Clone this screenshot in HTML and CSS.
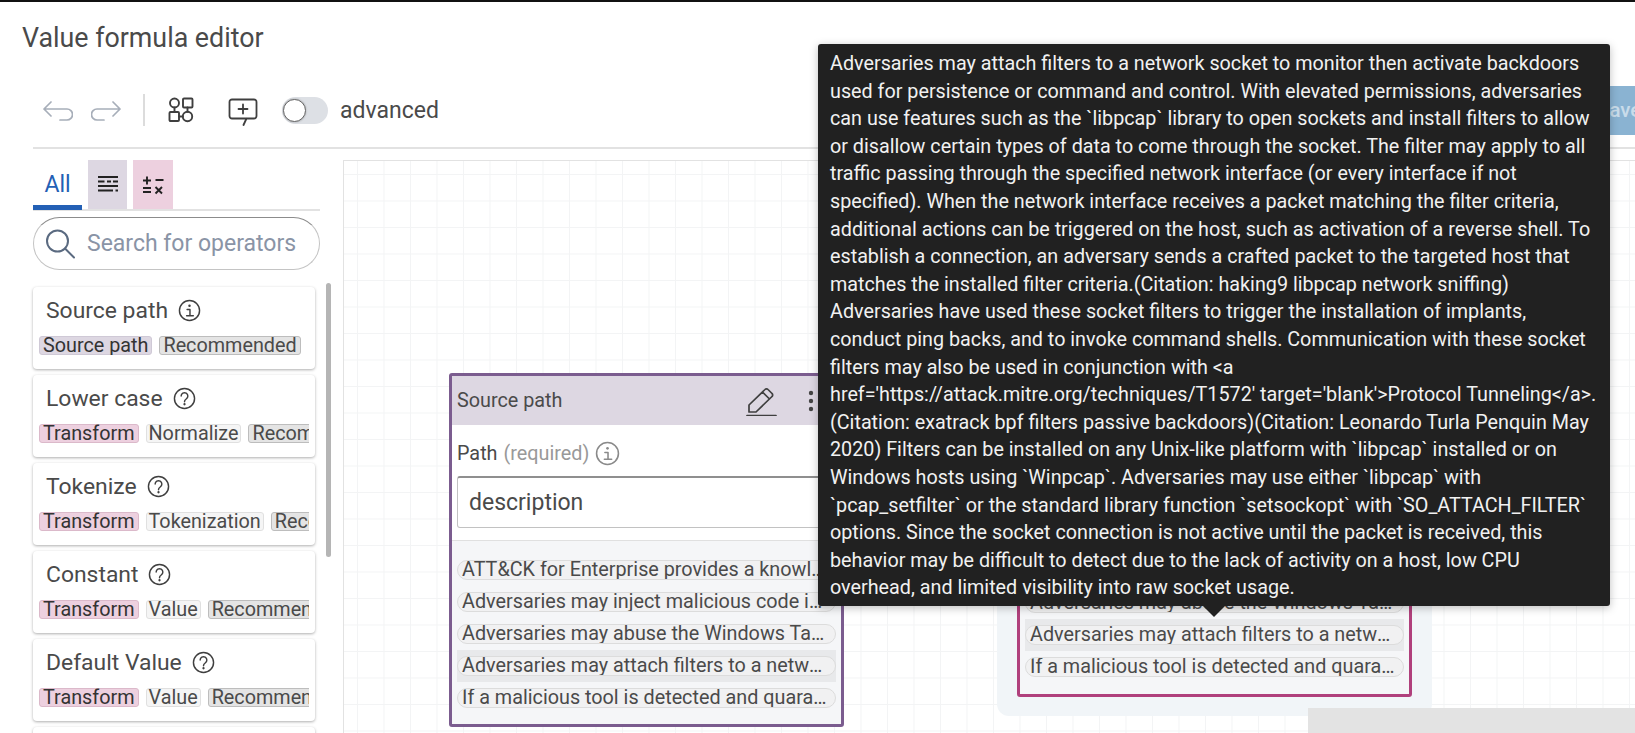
FILE: index.html
```html
<!DOCTYPE html>
<html lang="en">
<head>
<meta charset="utf-8">
<title>Value formula editor</title>
<link rel="stylesheet" href="styles.css">
</head>
<body>
<div class="topbar"></div>
<h1 class="title">Value formula editor</h1>
<div class="toolbar">
  <svg class="ic-undo" viewBox="0 0 30 24"><path d="M1 11H24A5.5 5.5 0 0 1 24 22H17M8 4L1 11L8 18"/></svg>
  <svg class="ic-redo" viewBox="0 0 30 24"><path d="M29 11H6A5.5 5.5 0 0 0 6 22H13M22 4L29 11L22 18"/></svg>
  <span class="divider"></span>
  <svg class="ic-flow" viewBox="0 0 26 26"><circle cx="6.5" cy="6" r="4.500"/><rect x="15" y="1.500" width="9.500" height="9" rx="1"/><rect x="1.500" y="15" width="9.500" height="9" rx="1"/><circle cx="19.500" cy="19.500" r="4.700"/><path d="M6.500 10.500V15M19.500 10.500V14.800M11 19.500H14.800"/></svg>
  <svg class="ic-comment" viewBox="0 0 30 28"><path d="M18 20.5H4A2.5 2.5 0 0 1 1.500 18V4A2.500 2.500 0 0 1 4 1.500H26A2.500 2.500 0 0 1 28.500 4V18A2.500 2.500 0 0 1 26 20.500H18.500L15.500 27M15 6.500V15.500M10.500 11H19.500"/></svg>
  <span class="switch"><span class="knob"></span></span>
  <span class="adv">advanced</span>
  <button class="save" type="button">Save</button>
</div>
<div class="main">
  <aside class="panel">
    <div class="tabs">
      <span class="tab-all">All</span>
      <span class="tab-src"><svg viewBox="0 0 22 20"><path d="M1 2H21M1 6.500H7.500M10 6.500H14M16 6.500H21M1 11H21M1 15.500H16M18.500 15.500H21"/></svg></span>
      <span class="tab-tf"><svg viewBox="0 0 22 20"><path d="M1 5.500H9M5 1.500V9.500M13.500 5H21.500M1 13H9M1 17H9M13.500 12L20 18.500M20 12L13.500 18.500"/></svg></span>
    </div>
    <div class="search">
      <svg viewBox="0 0 30 30"><circle cx="12.500" cy="12" r="10.500"/><path d="M20 19.500L29 28.500"/></svg>
      <span>Search for operators</span>
    </div>
    <div class="list-wrap">
      <div class="list">
        <div class="card">
          <div class="card-title">Source path <svg class="info" viewBox="0 0 24 24"><circle cx="12" cy="12" r="10.500"/><circle cx="12" cy="7" r="1.300" class="fill"/><path d="M9.500 11H12.500V17.500M9 17.500H16"/></svg></div>
          <div class="tags"><span class="tag t-src">Source path</span><span class="tag t-rec">Recommended</span></div>
        </div>
        <div class="card">
          <div class="card-title">Lower case <svg class="info" viewBox="0 0 24 24"><circle cx="12" cy="12" r="10.500"/><path d="M8.500 9.500A3.500 3.500 0 1 1 13.800 12.500C12.600 13.300 12 14 12 15.500"/><circle cx="12" cy="18" r="1.200" class="fill"/></svg></div>
          <div class="tags"><span class="tag t-tf">Transform</span><span class="tag t-cat">Normalize</span><span class="tag t-rec">Recommended</span></div>
        </div>
        <div class="card">
          <div class="card-title">Tokenize <svg class="info" viewBox="0 0 24 24"><circle cx="12" cy="12" r="10.500"/><path d="M8.500 9.500A3.500 3.500 0 1 1 13.800 12.500C12.600 13.300 12 14 12 15.500"/><circle cx="12" cy="18" r="1.200" class="fill"/></svg></div>
          <div class="tags"><span class="tag t-tf">Transform</span><span class="tag t-cat">Tokenization</span><span class="tag t-rec">Recommended</span></div>
        </div>
        <div class="card">
          <div class="card-title">Constant <svg class="info" viewBox="0 0 24 24"><circle cx="12" cy="12" r="10.500"/><path d="M8.500 9.500A3.500 3.500 0 1 1 13.800 12.500C12.600 13.300 12 14 12 15.500"/><circle cx="12" cy="18" r="1.200" class="fill"/></svg></div>
          <div class="tags"><span class="tag t-tf">Transform</span><span class="tag t-cat">Value</span><span class="tag t-rec">Recommended</span></div>
        </div>
        <div class="card">
          <div class="card-title">Default Value <svg class="info" viewBox="0 0 24 24"><circle cx="12" cy="12" r="10.500"/><path d="M8.500 9.500A3.500 3.500 0 1 1 13.800 12.500C12.600 13.300 12 14 12 15.500"/><circle cx="12" cy="18" r="1.200" class="fill"/></svg></div>
          <div class="tags"><span class="tag t-tf">Transform</span><span class="tag t-cat">Value</span><span class="tag t-rec">Recommended</span></div>
        </div>
        <div class="card"></div>
      </div>
      <div class="scroll-thumb"></div>
    </div>
  </aside>
  <section class="canvas">
    <div class="group"></div>
    <div class="node node-source">
      <div class="node-head">
        <span class="node-name">Source path</span>
        <svg class="ic-pencil" viewBox="0 0 32 30"><path d="M3 26V19L19 3.500A2 2 0 0 1 22 3.500L26 7.500A2 2 0 0 1 26 10.500L10 26ZM16.500 6L23.500 13M1 29.500H30"/></svg>
        <svg class="ic-dots" viewBox="0 0 6 22"><circle cx="3" cy="3" r="2.200"/><circle cx="3" cy="11" r="2.200"/><circle cx="3" cy="19" r="2.200"/></svg>
      </div>
      <div class="field">
        <div class="field-label">Path <span class="req">(required)</span> <svg class="info info-grey" viewBox="0 0 24 24"><circle cx="12" cy="12" r="10.500"/><circle cx="12" cy="7" r="1.300" class="fill"/><path d="M9.500 11H12.500V17.500M9 17.500H16"/></svg></div>
        <div class="input">description</div>
      </div>
      <div class="chips">
        <div class="chip-row"><span class="chip">ATT&amp;CK for Enterprise provides a knowledge base of adversary tactics</span></div>
        <div class="chip-row"><span class="chip">Adversaries may inject malicious code into processes in order to evade</span></div>
        <div class="chip-row"><span class="chip">Adversaries may abuse the Windows Task Scheduler to perform task</span></div>
        <div class="chip-row active"><span class="chip">Adversaries may attach filters to a network socket to monitor then</span></div>
        <div class="chip-row"><span class="chip">If a malicious tool is detected and quarantined or otherwise curtailed</span></div>
      </div>
    </div>
    <div class="node node-target">
      <div class="chips">
        <div class="chip-row"><span class="chip">Adversaries may abuse the Windows Task Scheduler to perform task</span></div>
        <div class="chip-row active"><span class="chip">Adversaries may attach filters to a network socket to monitor then</span></div>
        <div class="chip-row"><span class="chip">If a malicious tool is detected and quarantined or otherwise curtailed</span></div>
      </div>
    </div>
    <div class="minimap"></div>
  </section>
</div>
<div class="tooltip">Adversaries may attach filters to a network socket to monitor then activate backdoors used for persistence or command and control. With elevated permissions, adversaries can use features such as the `libpcap` library to open sockets and install filters to allow or disallow certain types of data to come through the socket. The filter may apply to all traffic passing through the specified network interface (or every interface if not specified). When the network interface receives a packet matching the filter criteria, additional actions can be triggered on the host, such as activation of a reverse shell. To establish a connection, an adversary sends a crafted packet to the targeted host that matches the installed filter criteria.(Citation: haking9 libpcap network sniffing) Adversaries have used these socket filters to trigger the installation of implants, conduct ping backs, and to invoke command shells. Communication with these socket filters may also be used in conjunction with &lt;a href='https://attack.mitre.org/techniques/T1572' target='blank'&gt;Protocol Tunneling&lt;/a&gt;.(Citation: exatrack bpf filters passive backdoors)(Citation: Leonardo Turla Penquin May 2020) Filters can be installed on any Unix-like platform with `libpcap` installed or on Windows hosts using `Winpcap`. Adversaries may use either `libpcap` with `pcap_setfilter` or the standard library function `setsockopt` with `SO_ATTACH_FILTER` options. Since the socket connection is not active until the packet is received, this behavior may be difficult to detect due to the lack of activity on a host, low CPU overhead, and limited visibility into raw socket usage.</div>
</body>
</html>
```
FILE: styles.css
```css
* { box-sizing: border-box; }
html, body { margin: 0; height: 100%; }
body {
  width: 1635px; height: 733px; overflow: hidden; position: relative;
  font-family: Roboto, "Liberation Sans", sans-serif; color: #4a4a4a; background: #fff;
}
svg { fill: none; stroke-linecap: round; stroke-linejoin: round; flex: none; }
.topbar { height: 2px; background: #111; }
.title { margin: 0; padding: 19px 0 0 22px; height: 84px; font-size: 26.800px; font-weight: 400; line-height: 34px; color: #4a4a4a; }

.toolbar { display: flex; align-items: center; height: 63px; margin-left: 33px; border-bottom: 2px solid #e2e2e2; padding: 0 0 13px 10px; overflow: hidden; }
.ic-undo, .ic-redo { width: 30px; height: 24px; stroke: #a7aeb9; stroke-width: 1.700; }
.ic-redo { margin-left: 18px; }
.divider { width: 2px; height: 32px; background: #dcdcdc; margin: 0 24px 0 22px; }
.ic-flow { width: 26px; height: 26px; margin-left: -1px; stroke: #3f3f3f; stroke-width: 1.900; }
.ic-comment { width: 30px; height: 28px; margin-left: 34px; stroke: #3f3f3f; stroke-width: 1.800; position: relative; top: 2px; }
.switch { width: 46px; height: 27px; border-radius: 14px; background: #dde0e5; margin-left: 24px; display: flex; align-items: center; padding-left: 1px; }
.knob { width: 23px; height: 23px; border-radius: 50%; background: #fff; border: 1.500px solid #666; box-shadow: 0 0 2px rgba(0,0,0,.3); }
.adv { margin-left: 12px; font-size: 23px; color: #4a4a4a; }
.save { margin-left: auto; flex: none; width: 53px; height: 50px; border: 0; padding: 0 0 0 15px; background: #8ab3d2; color: #c9dcea; font: 500 20.500px Roboto, sans-serif; text-align: left; white-space: nowrap; overflow: hidden; }

.main { display: flex; height: 584px; }
.panel { width: 343px; flex: none; padding: 11px 0 0 33px; overflow: hidden; }
.tabs { display: flex; width: 287px; height: 51px; border-bottom: 2px solid #e2e2e2; }
.tab-all { width: 49px; height: 50px; border-bottom: 5px solid #2360b5; color: #2360b5; font-size: 23px; line-height: 49px; text-align: center; }
.tab-src, .tab-tf { display: flex; align-items: center; justify-content: center; height: 49px; margin-left: 6px; }
.tab-src { width: 39px; background: #ddd7e2; }
.tab-tf { width: 40px; background: #edd0df; }
.tabs svg { width: 22px; height: 20px; stroke: #222; stroke-width: 1.900; stroke-linecap: butt; }
.search { display: flex; align-items: center; gap: 12px; width: 287px; height: 53px; margin-top: 6px; padding-left: 11px; border: 1.500px solid #c4c4c4; border-top-color: #8c8c8c; border-radius: 27px; font-size: 23px; color: #8a94a6; }
.search svg { width: 30px; height: 30px; stroke: #5a6a80; stroke-width: 2; }
.list-wrap { display: flex; margin-top: 17px; }
.list { width: 282px; flex: none; display: flex; flex-direction: column; gap: 6px; }
.card { flex: none; height: 82px; padding: 7px 6px 0; background: #fff; border-radius: 4px; box-shadow: 0 1px 3px rgba(0,0,0,.32); }
.card-title { display: flex; align-items: center; gap: 10px; padding-left: 7px; height: 32px; font-size: 22.900px; color: #4a4a4a; }
.info { width: 23px; height: 23px; stroke: #3f3f3f; stroke-width: 1.500; }
.fill { fill: #3f3f3f; stroke: none; }
.tags { display: flex; gap: 7px; margin-top: 10px; width: 270px; overflow: hidden; }
.tag { flex: none; height: 19px; padding: 0 3px; border-radius: 3px; border: 1px solid; font-size: 19.800px; line-height: 17px; color: #4a4a4a; }
.t-src { background: #ddd7e2; border-color: #cfc9d6; color: #333; }
.t-rec { background: #e4e4e4; border-color: #bdbdbd; }
.t-tf { background: #edd0df; border-color: #dbb9ca; color: #333; }
.t-cat { background: #f5f5f5; border-color: #e0e0e0; padding: 0 2px; }
.scroll-thumb { flex: none; width: 5px; height: 274px; margin: -4px 0 0 11px; border-radius: 3px; background: #b5b5b5; }

.canvas {
  position: relative; flex: 1; margin-top: 11px; overflow: hidden;
  border-left: 1px solid #e2e2e2; border-top: 1px solid #e2e2e2;
  background-image: linear-gradient(#f3f4f5 1px, transparent 1px), linear-gradient(90deg, #f3f4f5 1px, transparent 1px);
  background-size: 26.500px 26.500px; background-position: 13px 13px;
}
.group { position: absolute; left: 653px; top: 390px; width: 435px; height: 165px; background: #f1f5f8; border-radius: 12px; }
.node { position: absolute; background: #fff; border: 3px solid; border-radius: 3px; }
.node-source { left: 105px; top: 212px; width: 395px; height: 354px; border-color: #7b5c8f; display: flex; flex-direction: column; }
.node-target { left: 673px; top: 401px; width: 395px; height: 135px; border-color: #b0407c; background: #f5f6f8; display: flex; flex-direction: column; justify-content: flex-end; }
.node-head { display: flex; align-items: center; height: 49px; flex: none; padding-left: 5px; background: #ddd7e2; }
.node-name { flex: 1; font-size: 19.800px; color: #4a4a4a; }
.ic-pencil { width: 32px; height: 30px; margin-right: 30px; stroke: #3f3f3f; stroke-width: 1.700; }
.ic-dots { width: 6px; height: 22px; margin-right: 27px; fill: #444; stroke: none; }
.field { flex: none; height: 116px; padding: 15px 5px 0; border-bottom: 1px solid #e0e0e0; }
.field-label { display: flex; align-items: center; gap: 6px; height: 26px; font-size: 19.800px; color: #4a4a4a; }
.req { color: #999; }
.info-grey { width: 25px; height: 25px; stroke: #8a8a8a; }
.info-grey .fill { fill: #8a8a8a; }
.input { height: 52px; margin-top: 10px; width: 380px; padding-left: 11px; border: 1.500px solid #c2c2c2; border-top: 2px solid #8f8f8f; border-radius: 3px; font-size: 23px; line-height: 50px; color: #4a4a4a; }
.chips { flex: 1; padding: 13px 5px 0; background: #f5f6f8; display: flex; flex-direction: column; }
.node-target .chips { flex: none; padding: 0 5px 11px; }
.chip-row { height: 32px; flex: none; display: flex; align-items: center; }
.chip-row.active { background: #e8e9eb; }
.chip { display: block; width: 100%; height: 20px; padding: 0 4px; border: 1px solid #dcdcdc; border-radius: 10px; background: #f1f1f2; font-size: 19.800px; line-height: 18px; color: #4a4a4a; white-space: nowrap; overflow: hidden; text-overflow: ellipsis; }
.minimap { position: absolute; left: 964px; top: 547px; right: 0; bottom: 0; background: #e3e3e3; }

.tooltip { position: absolute; left: 818px; top: 44px; width: 792px; height: 562px; padding: 6px 12px; background: #212121; color: #f1f1f1; border-radius: 3px; font-size: 19.760px; line-height: 27.600px; box-shadow: 0 2px 8px rgba(0,0,0,.25); }
.tooltip::after { content: ""; position: absolute; left: 385px; top: 100%; border: 11px solid transparent; border-top-color: #212121; border-bottom: 0; }
```
